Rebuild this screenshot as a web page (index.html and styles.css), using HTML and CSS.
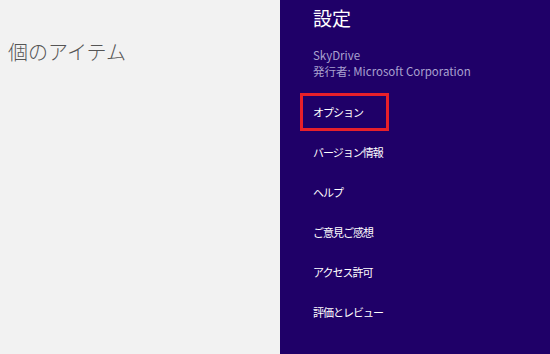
FILE: index.html
```html
<!DOCTYPE html>
<html>

<head>
    <title>設定</title>
    <link rel="stylesheet" href="styles.css">
</head>

<body>
    <div class="items-pane">
        <h2 class="items-count">個のアイテム</h2>
    </div>

    <section class="settings">
        <h1 class="settings-title">設定</h1>
        <div class="app-info">
            <div>SkyDrive</div>
            <div>発行者: Microsoft Corporation</div>
        </div>
        <ul class="settings-list">
            <li class="selected">オプション</li>
            <li>バージョン情報</li>
            <li>ヘルプ</li>
            <li>ご意見ご感想</li>
            <li>アクセス許可</li>
            <li>評価とレビュー</li>
        </ul>
    </section>
</body>

</html>
```

FILE: styles.css
```css
/* CSS styles */
html,
body {
    height: 100%;
    margin: 0;
    padding: 0;
}

body {
    display: flex;
    font-family: "Noto Sans CJK JP", "Liberation Sans", sans-serif;
    overflow: hidden;
}

.items-pane {
    width: 280px;
    background-color: #f2f2f2;
    padding: 0 8px;
    box-sizing: border-box;
}

.items-count {
    margin: 37px 0 0;
    font-size: 20px;
    font-weight: 300;
    color: #555555;
}

.settings {
    flex: 1;
    background-color: #1f0068;
    padding: 0 0 0 33px;
    color: #ffffff;
}

.settings-title {
    margin: 4px 0 0;
    font-size: 19px;
    font-weight: 400;
    line-height: 28px;
}

.app-info {
    margin-top: 15px;
    font-size: 11.5px;
    line-height: 16px;
    color: #a9a1cf;
}

.settings-list {
    list-style: none;
    margin: 14px 0 0 -13px;
    padding: 0;
}

.settings-list li {
    font-size: 11px;
    letter-spacing: -1px;
    line-height: 14px;
    padding: 9px 10px;
    margin-bottom: 2px;
    width: 63px;
    white-space: nowrap;
    border: 3px solid transparent;
}

.settings-list li.selected {
    border-color: #e8202a;
}
```
